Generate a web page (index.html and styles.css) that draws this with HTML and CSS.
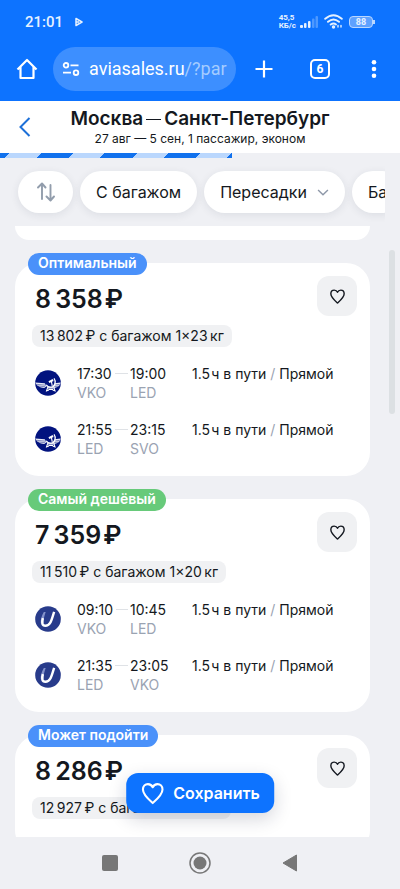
FILE: index.html
```html
<!DOCTYPE html>
<html lang="ru">
<head>
<meta charset="utf-8">
<meta name="viewport" content="width=device-width, initial-scale=1">
<title>Москва — Санкт-Петербург</title>
<link rel="stylesheet" href="styles.css">
</head>
<body>
<svg class="defs" aria-hidden="true">
  <symbol id="heart" viewBox="0 0 24 24"><path d="M12 21.2C8.6 18.2 2.6 13.2 2.6 8.2C2.6 5 4.8 3 7.4 3C9.6 3 11.2 4.2 12 6C12.8 4.2 14.4 3 16.6 3C19.2 3 21.4 5 21.4 8.2C21.4 13.2 15.4 18.2 12 21.2Z" fill="none" stroke="currentColor" stroke-linejoin="round"/></symbol>
  <symbol id="aeroflot" viewBox="0 0 28 28">
    <circle cx="14" cy="14" r="13.800" fill="#02137f"/>
    <path d="M.3 13.500L10.500 14.300L12.500 17.500L10 19.400C5 18.800 2 17.300 .3 13.500ZM27.700 13.500L21 14.300L19.500 17.500L21 19.400C24.500 18.800 27 17 27.700 13.500Z" fill="#e9ebf5"/>
    <path d="M1.500 15.400L12 16.400M3 17.200L11 18M20.500 16.200L26.800 15.400M20.500 17.900L25.500 17.300" stroke="#02137f" stroke-width=".5"/>
    <path d="M20.500 9C23 12.500 21.800 17.800 17.500 18.500C14.800 18.800 13 17.500 12 16" fill="none" stroke="#fff" stroke-width="1.400"/>
    <path d="M14.500 12L19 9.800L20 11.800L15.500 14Z" fill="#fff"/>
    <path d="M17.600 12L18.600 17M13 19.300H21M13.500 19.300L12.500 22.500L15 21.500M20.500 19.300L21.500 22.500L19 21.500M14.500 21H19.500" fill="none" stroke="#fff" stroke-width="1.200"/>
  </symbol>
  <symbol id="utair" viewBox="0 0 28 28">
    <circle cx="14" cy="14" r="13.800" fill="#283b8b"/>
    <path d="M9.500 6.500C7.300 10.500 5.800 15 6.200 18.500L9.500 18C8.800 14.500 10.200 10.500 11.500 6.500Z" fill="#8492ca"/>
    <path d="M8.500 13C7 18 7.500 21.200 11.200 21.200C17 21.200 17.800 14.500 20.600 6.300" fill="none" stroke="#fff" stroke-width="2.600"/>
  </symbol>
</svg>

<div class="status">
  <span class="clock">21:01</span>
  <svg class="play" width="8" height="10" viewBox="0 0 8 10"><path d="M1 1.500L7 5L1 8.500ZM1 5H4" fill="none" stroke="currentColor" stroke-width="1.500" stroke-linejoin="round"/></svg>
  <span class="speed">45,5<br>КБ/с</span>
  <svg width="18" height="12" viewBox="0 0 18 12" fill="currentColor"><rect y="9" width="3" height="3" rx="1"/><rect x="4" y="7" width="2.500" height="5" rx="1"/><rect x="8" y="5" width="2.500" height="7" rx="1"/><rect x="12" y="2.500" width="2.500" height="9.500" rx="1" opacity=".3"/><rect x="15.500" width="2.500" height="12" rx="1" opacity=".3"/></svg>
  <svg class="wifi" width="19" height="15" viewBox="0 0 19 15" fill="none" stroke="currentColor" stroke-width="1.900" stroke-linecap="round"><path d="M1.200 4.800Q9.500-2.300 17.800 4.800M4 7.800Q9.500 3.200 15 7.800M6.700 10.600Q9.500 8.500 12 10.400"/><circle cx="9.500" cy="13" r=".8" fill="currentColor"/><path d="M14 13V11.500M17 11.500V13" stroke-width="1.400"/></svg>
  <span class="battery">88</span>
</div>

<div class="toolbar">
  <button class="tool home" aria-label="Домой"><svg width="22" height="22" viewBox="0 0 22 22"><path d="M1.500 11.500L11 2L20.500 11.500M4.500 9V20H17.500V9" fill="none" stroke="currentColor" stroke-width="2.200" stroke-linejoin="round"/></svg></button>
  <button class="address" aria-label="Адрес страницы">
    <svg width="18" height="14" viewBox="0 0 18 14" fill="none" stroke="currentColor" stroke-width="1.800"><circle cx="4" cy="3.300" r="2.300"/><path d="M8.500 3.300H16.500M1 10.700H9"/><circle cx="14" cy="10.700" r="2.300"/></svg>
    <span class="url">aviasales.ru<span class="query">/?par</span></span>
  </button>
  <button class="tool" aria-label="Новая вкладка"><svg width="18" height="18" viewBox="0 0 18 18"><path d="M9 .5V17.500M.5 9H17.500" stroke="currentColor" stroke-width="2.200"/></svg></button>
  <button class="tool" aria-label="Вкладки"><span class="tabs">6</span></button>
  <button class="tool menu" aria-label="Меню"><svg width="6" height="18" viewBox="0 0 6 18" fill="currentColor"><circle cx="3" cy="2.300" r="2.300"/><circle cx="3" cy="9" r="2.300"/><circle cx="3" cy="15.700" r="2.300"/></svg></button>
</div>

<header class="header">
  <button class="back" aria-label="Назад"><svg width="12" height="20" viewBox="0 0 12 20"><path d="M10.500 1L1.500 10L10.500 19" fill="none" stroke="currentColor" stroke-width="2"/></svg></button>
  <div class="route">
    <h1>Москва<span class="long-dash"></span>Санкт-Петербург</h1>
    <p>27 авг — 5 сен, 1 пассажир, эконом</p>
  </div>
</header>

<main class="results">
  <div class="progress"></div>
  <div class="filters">
    <button class="chip sort" aria-label="Сортировка"><svg width="18" height="20" viewBox="0 0 18 20" fill="none" stroke="currentColor" stroke-width="1.900" stroke-linecap="round" stroke-linejoin="round"><path d="M5 17V2M1 5.500L5 1.500L8.500 5.500M13.500 3V18M9.500 14.500L13.500 18.500L17 14.500"/></svg></button>
    <button class="chip">С багажом</button>
    <button class="chip">Пересадки<svg width="12" height="7" viewBox="0 0 10 6"><path d="M.8 .8L5 5L9.200 .8" fill="none" stroke="#8e98a8" stroke-width="1.200"/></svg></button>
    <button class="chip">Ба</button>
  </div>

  <div class="list">
    <div class="card previous"></div>

    <article class="card">
      <span class="tag">Оптимальный</span>
      <button class="like" aria-label="В избранное"><svg width="17" height="17"><use href="#heart"/></svg></button>
      <h2>8&#8201;358&#8202;₽</h2>
      <p class="baggage">13&#8201;802&#8201;₽ с багажом 1×23&#8201;кг</p>
      <div class="segment">
        <svg class="logo"><use href="#aeroflot"/></svg>
        <div class="from"><span>17:30</span><small>VKO</small></div>
        <div><span>19:00</span><small>LED</small></div>
        <div>1.5&#8202;ч в пути <i>/</i> Прямой</div>
      </div>
      <div class="segment">
        <svg class="logo"><use href="#aeroflot"/></svg>
        <div class="from"><span>21:55</span><small>LED</small></div>
        <div><span>23:15</span><small>SVO</small></div>
        <div>1.5&#8202;ч в пути <i>/</i> Прямой</div>
      </div>
    </article>

    <article class="card">
      <span class="tag cheap">Самый дешёвый</span>
      <button class="like" aria-label="В избранное"><svg width="17" height="17"><use href="#heart"/></svg></button>
      <h2>7&#8201;359&#8202;₽</h2>
      <p class="baggage">11&#8201;510&#8201;₽ с багажом 1×20&#8201;кг</p>
      <div class="segment">
        <svg class="logo"><use href="#utair"/></svg>
        <div class="from"><span>09:10</span><small>VKO</small></div>
        <div><span>10:45</span><small>LED</small></div>
        <div>1.5&#8202;ч в пути <i>/</i> Прямой</div>
      </div>
      <div class="segment">
        <svg class="logo"><use href="#utair"/></svg>
        <div class="from"><span>21:35</span><small>LED</small></div>
        <div><span>23:05</span><small>VKO</small></div>
        <div>1.5&#8202;ч в пути <i>/</i> Прямой</div>
      </div>
    </article>

    <article class="card">
      <span class="tag">Может подойти</span>
      <button class="like" aria-label="В избранное"><svg width="17" height="17"><use href="#heart"/></svg></button>
      <h2>8&#8201;286&#8202;₽</h2>
      <p class="baggage">12&#8201;927&#8201;₽ с багажом 1×20&#8201;кг</p>
    </article>
  </div>
  <div class="scrollbar"></div>
  <button class="save"><svg width="25" height="25"><use href="#heart"/></svg>Сохранить</button>
</main>

<nav class="system">
  <button aria-label="Недавние"><svg width="16" height="16"><rect width="16" height="16" rx="2" fill="#777"/></svg></button>
  <button aria-label="Главный экран"><svg width="22" height="22"><circle cx="11" cy="11" r="10" fill="none" stroke="#777" stroke-width="1.500"/><circle cx="11" cy="11" r="6.500" fill="#777"/></svg></button>
  <button aria-label="Назад"><svg width="16" height="18" viewBox="0 0 16 18"><path d="M1 9L14.500 1V17Z" fill="#777" stroke="#777" stroke-linejoin="round"/></svg></button>
</nav>
</body>
</html>
```
FILE: styles.css
```css
* { box-sizing: border-box; }

body {
  margin: 0;
  height: 100vh;
  display: flex;
  flex-direction: column;
  background: #eff0f4;
  color: #141820;
  font: 14px/19px Inter, "Liberation Sans", sans-serif;
}

h1, h2, p { margin: 0; }

button {
  border: 0;
  padding: 0;
  background: none;
  color: inherit;
  font: inherit;
}

svg { display: block; flex: none; }

.defs { position: absolute; width: 0; height: 0; }

.status {
  display: flex;
  align-items: center;
  gap: 4px;
  height: 43px;
  padding: 0 27px 0 25px;
  background: #0d73ff;
  color: #e6f1ff;
}

.clock { font: 500 15px/20px Roboto, sans-serif; }
.play { margin-left: 8px; }
.speed { margin-left: auto; font: 700 8px/8px Roboto, sans-serif; }
.wifi { margin: 0 2px; }

.battery {
  position: relative;
  width: 24px;
  height: 12px;
  border: 1px solid #b9d7ff;
  border-radius: 4px;
  background: #5ea1ff;
  font: 700 9px/10px Roboto, sans-serif;
  text-align: center;
}

.battery::after {
  content: "";
  position: absolute;
  top: 3px;
  right: -3px;
  width: 2px;
  height: 4px;
  background: #b9d7ff;
}

.toolbar {
  display: flex;
  align-items: center;
  height: 58px;
  padding-bottom: 6px;
  background: #0d73ff;
  color: #fff;
}

.tool { display: grid; place-items: center; width: 56px; height: 44px; }
.home { width: 53px; }
.menu { width: 52px; }

.address {
  flex: 1;
  display: flex;
  align-items: center;
  gap: 9px;
  height: 44px;
  padding: 0 9px;
  border-radius: 22px;
  background: #3d8fff;
  font: 18px/24px Roboto, sans-serif;
}

.query { color: #a4ccff; }

.tabs {
  width: 20px;
  height: 20px;
  border: 2px solid;
  border-radius: 5px;
  font: 700 12px/16px Roboto, sans-serif;
}

.header {
  display: grid;
  grid-template-columns: 50px 1fr 50px;
  height: 52px;
  background: #fff;
}

.back { display: grid; place-items: center; color: #1d70d8; }

.route {
  display: flex;
  flex-direction: column;
  align-items: center;
  padding-top: 6px;
  white-space: nowrap;
}

h1 { display: flex; align-items: center; font-size: 19px; line-height: 24px; font-weight: 600; }
.long-dash { width: 15px; height: 1px; margin: 0 3px; background: #141820; }
.route p { font-size: 12px; line-height: 16px; }

.results {
  position: relative;
  flex: 1;
  min-height: 0;
  display: flex;
  flex-direction: column;
}

.progress {
  flex: none;
  width: 58%;
  height: 5px;
  background: repeating-linear-gradient(135deg, #1171ed 0 7px, #bad7fd 7px 29px, #1171ed 29px 45px);
}

.filters {
  display: flex;
  gap: 7px;
  flex: none;
  margin-right: 15px;
  padding: 13px 0 13px 18px;
  overflow: hidden;
}

.chip {
  flex: none;
  display: flex;
  align-items: center;
  gap: 10px;
  height: 42px;
  padding: 0 16px;
  border-radius: 21px;
  background: #fff;
  box-shadow: 0 2px 8px rgba(30, 40, 70, .09);
  font-size: 16px;
}

.sort { width: 55px; justify-content: center; color: #929dac; }

.list {
  flex: 1;
  min-height: 0;
  display: flex;
  flex-direction: column;
  gap: 23px;
  padding: 0 30px 0 15px;
  overflow: hidden;
}

.card {
  position: relative;
  flex: none;
  padding: 20px 13px 18px 20px;
  border-radius: 24px;
  background: #fff;
}

.previous { height: 14px; padding: 0; border-radius: 0 0 22px 22px; }

.tag {
  position: absolute;
  top: -10px;
  left: 13px;
  padding: 0 10px 2px;
  border-radius: 11px;
  background: #4a91fa;
  color: #fff;
  font-weight: 600;
  line-height: 20px;
}

.cheap { background: #67ca7a; }

.like {
  position: absolute;
  top: 13px;
  right: 13px;
  display: grid;
  place-items: center;
  width: 40px;
  height: 40px;
  border-radius: 12px;
  background: #f0f1f3;
  stroke-width: 2px;
}

h2 { font-size: 25px; line-height: 32px; font-weight: 600; }

.baggage {
  width: fit-content;
  margin: 10px 0 17px -3px;
  padding: 0 8px;
  border-radius: 8px;
  background: #f0f1f3;
  line-height: 22px;
}

.segment {
  display: grid;
  grid-template-columns: 42px 53px 62px 1fr;
  white-space: nowrap;
}

.segment + .segment { margin-top: 18px; }

.logo { width: 26px; height: 26px; align-self: center; }

.segment span { display: flex; align-items: center; gap: 3px; }

.from span::after {
  content: "";
  flex: 1;
  height: 1px;
  margin-right: 2px;
  background: #dfe2e6;
}

small { display: block; color: #9aa3b2; font-size: 14px; }

i { color: #9aa3b2; font-style: normal; }

.scrollbar {
  position: absolute;
  top: 97px;
  right: 5px;
  width: 6px;
  height: 24%;
  border-radius: 3px;
  background: #dce0e3;
}

.save {
  position: absolute;
  bottom: 24px;
  left: 50%;
  transform: translateX(-50%);
  display: flex;
  align-items: center;
  gap: 8px;
  height: 40px;
  padding: 0 14px;
  border-radius: 12px;
  background: #0d73ff;
  box-shadow: 0 6px 18px rgba(20, 30, 60, .18);
  color: #fff;
  font-size: 16px;
  font-weight: 600;
  stroke-width: 2px;
}

.system {
  display: flex;
  justify-content: center;
  flex: none;
  height: 52px;
}

.system button { display: grid; place-items: center; width: 90px; }
```
